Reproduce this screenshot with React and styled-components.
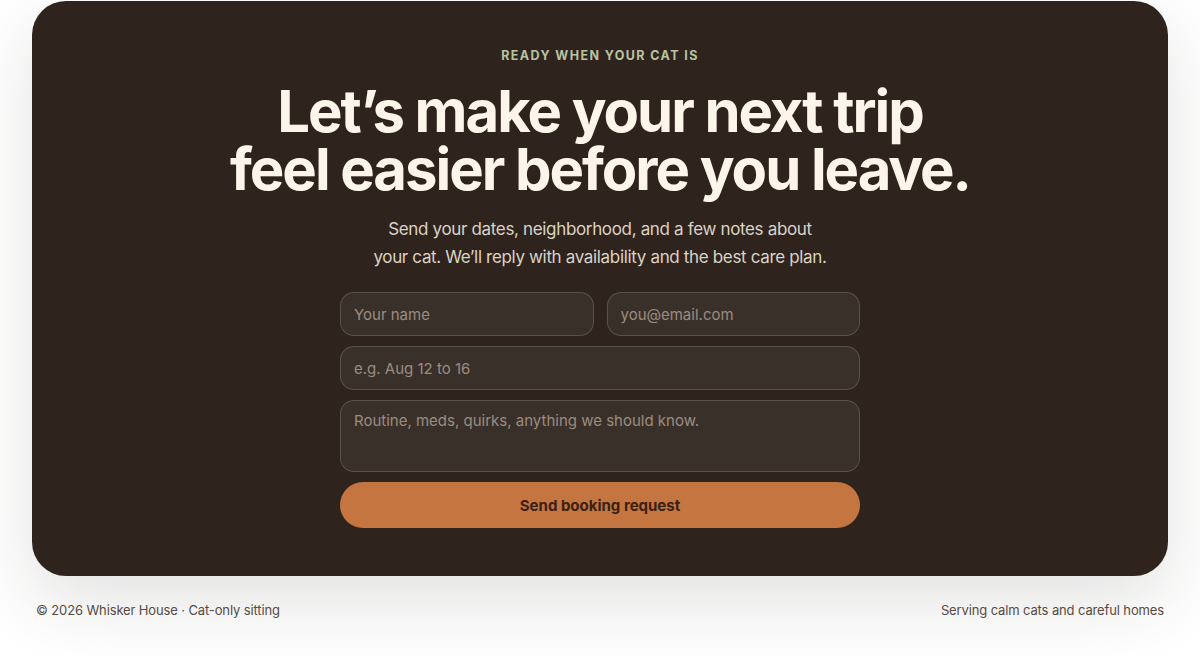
import React from "react";
import styled, { createGlobalStyle } from "styled-components";

const GlobalStyle = createGlobalStyle`
  * { box-sizing: border-box; }
  body {
    margin: 0;
    background: #ffffff;
    font-family: Inter, "Noto Sans", sans-serif;
    overflow: hidden;
  }
`;

const Page = styled.div`
  padding: 1px 32px 40px;
`;

const Card = styled.section`
  background: #2e241d;
  border-radius: 34px;
  padding: 47px 0 48px;
  display: flex;
  flex-direction: column;
  align-items: center;
  box-shadow: 0 26px 70px rgba(40, 30, 20, 0.13);
`;

const Eyebrow = styled.p`
  margin: 0;
  font-size: 12.5px;
  font-weight: 700;
  letter-spacing: 1.4px;
  color: #b9c3a2;
  text-transform: uppercase;
`;

const Title = styled.h1`
  margin: 19px 0 0;
  font-size: 58px;
  line-height: 58px;
  font-weight: 700;
  letter-spacing: -0.035em;
  color: #fbf5ea;
  text-align: center;
`;

const Lead = styled.p`
  margin: 17px 0 0;
  font-size: 17px;
  line-height: 28px;
  letter-spacing: -0.02em;
  color: #dcd2c6;
  text-align: center;
`;

const Form = styled.form`
  margin-top: 21px;
  width: 520px;
  display: flex;
  flex-direction: column;
  gap: 10px;
`;

const Row = styled.div`
  display: grid;
  grid-template-columns: 1fr 1fr;
  gap: 13px;
`;

const fieldStyles = `
  width: 100%;
  border-radius: 14px;
  border: 1px solid rgba(255, 255, 255, 0.16);
  background: rgba(255, 255, 255, 0.06);
  color: #fbf5ea;
  font-family: Inter, "Noto Sans", sans-serif;
  font-size: 15px;
  padding: 0 13px;
  outline: none;
  &::placeholder { color: #9a8d80; }
`;

const Input = styled.input`
  ${fieldStyles}
  height: 44px;
`;

const Notes = styled.textarea`
  ${fieldStyles}
  height: 72px;
  padding-top: 10px;
  resize: none;
  line-height: 20px;
`;

const Submit = styled.button`
  height: 46px;
  border: none;
  border-radius: 999px;
  background: #c47540;
  color: #3a2114;
  font-family: Inter, "Noto Sans", sans-serif;
  font-size: 15px;
  font-weight: 700;
  cursor: pointer;
`;

const Footer = styled.footer`
  display: flex;
  justify-content: space-between;
  padding: 26px 4px 0;
  font-size: 13px;
  letter-spacing: -0.01em;
  color: #564b43;
`;

export default function App() {
  return (
    <>
      <GlobalStyle />
      <Page>
        <Card>
          <Eyebrow>Ready when your cat is</Eyebrow>
          <Title>
            Let’s make your next trip
            <br />
            feel easier before you leave.
          </Title>
          <Lead>
            Send your dates, neighborhood, and a few notes about
            <br />
            your cat. We’ll reply with availability and the best care plan.
          </Lead>
          <Form onSubmit={(e) => e.preventDefault()}>
            <Row>
              <Input placeholder="Your name" />
              <Input type="email" placeholder="you@email.com" />
            </Row>
            <Input placeholder="e.g. Aug 12 to 16" />
            <Notes placeholder="Routine, meds, quirks, anything we should know." />
            <Submit type="submit">Send booking request</Submit>
          </Form>
        </Card>
        <Footer>
          <span>© 2026 Whisker House · Cat-only sitting</span>
          <span>Serving calm cats and careful homes</span>
        </Footer>
      </Page>
    </>
  );
}
